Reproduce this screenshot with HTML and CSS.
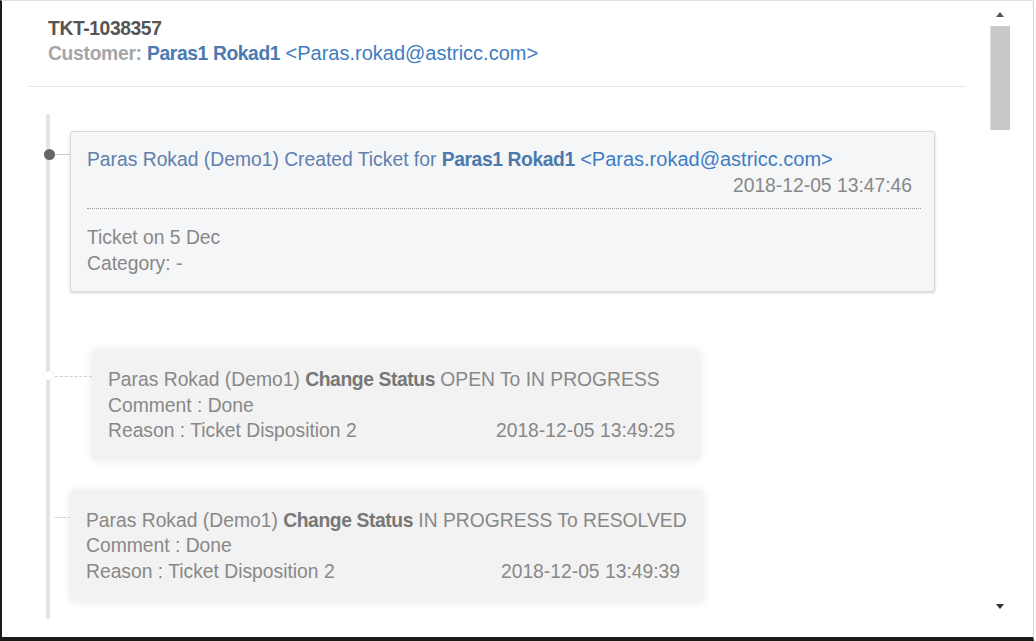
FILE: index.html
```html
<!DOCTYPE html>
<html lang="en">
<head>
  <meta charset="UTF-8" />
  <meta name="viewport" content="width=device-width, initial-scale=1.0"/>
  <title>TKT-1038357</title>
  <link rel="stylesheet" href="styles.css">
</head>
<body>

<div class="frame">
  <div class="main">
    <div class="ticket-head">
      <div class="ticket-id">TKT-1038357</div>
      <div class="customer">
        <span class="label">Customer:</span>
        <span class="name">Paras1 Rokad1</span>
        <span class="mail">&lt;Paras.rokad@astricc.com&gt;</span>
      </div>
    </div>

    <div class="timeline">
      <div class="entry created">
        <span class="dot"></span>
        <div class="entry-title">
          Paras Rokad (Demo1) Created Ticket for <b>Paras1 Rokad1</b>
          <span class="mail">&lt;Paras.rokad@astricc.com&gt;</span>
        </div>
        <div class="entry-time">2018-12-05 13:47:46</div>
        <div class="dots-line"></div>
        <div>Ticket on 5 Dec</div>
        <div>Category: -</div>
      </div>

      <div class="entry status first">
        <span class="dot light"></span>
        <div>Paras Rokad (Demo1) <b>Change Status</b> OPEN To IN PROGRESS</div>
        <div>Comment : Done</div>
        <div class="row">
          <span>Reason : Ticket Disposition 2</span>
          <span>2018-12-05 13:49:25</span>
        </div>
      </div>

      <div class="entry status second">
        <div>Paras Rokad (Demo1) <b>Change Status</b> IN PROGRESS To RESOLVED</div>
        <div>Comment : Done</div>
        <div class="row">
          <span>Reason : Ticket Disposition 2</span>
          <span>2018-12-05 13:49:39</span>
        </div>
      </div>
    </div>
  </div>

  <div class="scrollbar">
    <span class="arrow up"></span>
    <div class="track"><div class="thumb"></div></div>
    <span class="arrow down"></span>
  </div>
</div>

</body>
</html>
```

FILE: styles.css
```css
body{
  margin:0;background:#fff;
  font-family:"Liberation Sans", Arial, sans-serif;
}
.frame{
  width:1034px;height:641px;box-sizing:border-box;
  border-left:2px solid #1b1b1b;border-bottom:4px solid #1b1b1b;
  border-top:1px solid #e2e2e2;border-right:1px solid #d4d4d4;
  display:flex;overflow:hidden;
}
.main{
  width:937px;margin-left:26px;margin-right:23px;
}
b{letter-spacing:-.4px;}

/* header */
.ticket-head{
  padding:16px 20px 20px;border-bottom:1px solid #e4e4e4;
  font-size:19.3px;line-height:24px;
}
.ticket-id{font-weight:bold;color:#555;letter-spacing:-.4px;}
.customer .label{color:#a6a6a6;font-weight:bold;letter-spacing:-.3px;}
.customer .name{color:#4a7ab0;font-weight:bold;letter-spacing:-.4px;}
.mail{color:#3f7cc2;font-size:20px;}

/* timeline */
.timeline{
  margin:27px 0 0 18px;padding:17px 0 17px 20px;
  border-left:4px solid #e6e3e3;
  font-size:19.3px;line-height:25.5px;color:#888;
}
.entry{position:relative;box-sizing:border-box;white-space:nowrap;}
.entry b{color:#777;}
.created{
  margin-right:30px;padding:15px 22px 15px 16px;
  background:#f5f6f7;border:1px solid #d9d9d9;border-radius:3px;
  box-shadow:0 1px 3px rgba(0,0,0,.18);
}
.created .entry-title{color:#6080ad;}
.created .entry-title b{color:#4b79ad;}
.entry-time{text-align:right;}
.dots-line{
  border-top:1px dotted #9a9a9a;margin:10px -9px 16px 0;
}
.status{
  background:#f2f2f2;border-radius:6px;
  box-shadow:0 0 7px 2px rgba(0,0,0,.06);
}
.status.first{
  margin:58px 0 0 22px;width:608px;padding:17px 25px 16px 16px;
}
.status.second{
  margin-top:30px;width:634px;padding:18px 24px 18px 16px;
}
.row{display:flex;justify-content:space-between;}

/* markers on the line */
.entry::before{
  content:"";position:absolute;height:0;
  border-top:1px solid #c9c9c9;
}
.created::before{left:-17px;top:22px;width:16px;}
.status.first::before{left:-37px;top:26px;width:37px;border-top:1px dashed #cfcfcf;}
.status.second::before{left:-15px;top:27px;width:15px;border-top:1px dashed #cfcfcf;}
.dot{
  position:absolute;width:11px;height:11px;border-radius:50%;
  background:#666;
}
.created .dot{left:-27px;top:17px;}
.dot.light{
  left:-48px;top:21px;width:9px;height:9px;background:#fff;
  box-shadow:0 0 3px rgba(0,0,0,.08);
}

/* scrollbar */
.scrollbar{
  width:24px;display:flex;flex-direction:column;align-items:center;
  padding-top:11px;
}
.track{flex:1;width:20px;margin:6px 0 4px;}
.thumb{
  height:104px;width:19px;margin-top:3px;
  background:#c9c9c9;border-left:1px solid #dcdcdc;
}
.arrow{width:0;height:0;border-left:4px solid transparent;border-right:4px solid transparent;}
.arrow.up{border-bottom:5px solid #555;}
.arrow.down{border-top:5px solid #333;margin-bottom:28px;}
```
